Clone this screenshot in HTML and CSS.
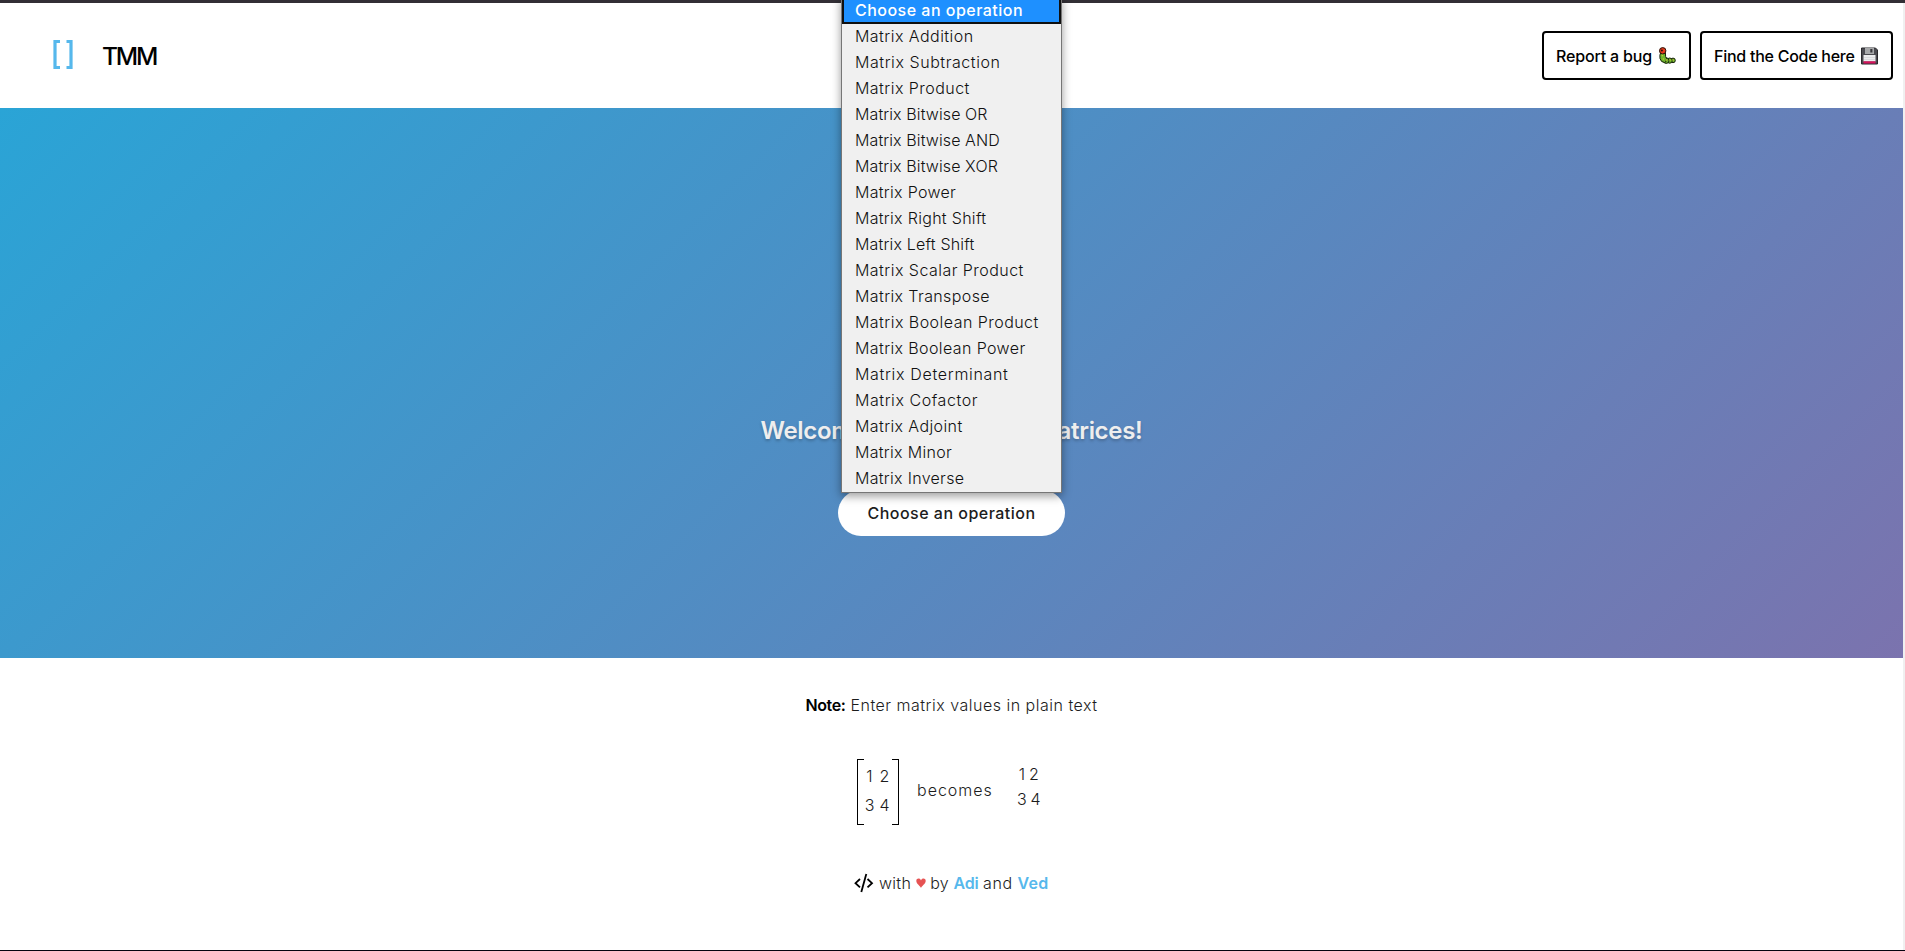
FILE: index.html
```
<!DOCTYPE html>
<html lang="en">
<head>
<meta charset="utf-8">
<title>TMM</title>
<link rel="stylesheet" href="styles.css">
</head>
<body>
<div class="page">
  <div class="top-edge"></div>
  <header class="navbar">
    <a class="brand">
      <svg class="brand-logo" width="20" height="29" viewBox="0 0 20 29"><path d="M7 1.5H2V27.5H7M13.5 1.5H18V27.5H13.5" fill="none" stroke="#56b8ec" stroke-width="3.2"/></svg>
      <span class="brand-name">TMM</span>
    </a>
    <nav class="nav-links">
      <a class="nav-button report"><span>Report a bug</span>
        <svg width="18" height="18" viewBox="0 0 18 18">
          <g fill="#6fb52c" stroke="#17210c" stroke-width="1"><circle cx="15" cy="13.4" r="2.3"/><circle cx="11.7" cy="13.6" r="2.6"/><circle cx="8.2" cy="13.6" r="2.8"/><path d="M2.8 5.5Q1.3 8 2 11.500Q3 15.500 6.500 15.500Q9 15 8.500 11.500Q7.300 10.500 7.400 6Z"/></g>
          <circle cx="4.7" cy="3.800" r="3.200" fill="#e8391b" stroke="#241309"/>
          <circle cx="3.900" cy="3.600" r="1" fill="#230f0a"/>
          <path d="M3.800 8.500h1M4.800 12h1M8 13h1M11.500 13h1M14.500 13h1" stroke="#d2cf35" stroke-width="1.300"/>
        </svg>
      </a>
      <a class="nav-button code"><span>Find the Code here</span>
        <svg width="17" height="18" viewBox="0 0 17 18">
          <path d="M.5 1H14.500L16.500 3V17H.5Z" fill="#4b4a50" stroke="#29282c"/>
          <path d="M4 1H13V7H4Z" fill="#a7a8aa"/><path d="M9.300 2H11.400V5.500H9.300Z" fill="#38373c"/>
          <path d="M2.500 8H14.500V14.500H2.500Z" fill="#ececee"/><path d="M3 10.500H14M3 12.500H14" stroke="#d2d2d5" stroke-width=".7"/>
          <path d="M2.500 14.300H14.500V16.500H2.500Z" fill="#d8125c"/>
        </svg>
      </a>
    </nav>
  </header>

  <main class="hero">
    <h1 class="welcome"><span>Welcome</span><span>Matrices!</span></h1>
    <div class="select">
      <span class="select-label">Choose an operation</span>
      <ul class="options">
        <li class="selected">Choose an operation</li>
        <li class="wide">Matrix Addition</li>
        <li class="wider">Matrix Subtraction</li>
        <li class="wide">Matrix Product</li>
        <li class="tight">Matrix Bitwise OR</li>
        <li class="tight">Matrix Bitwise AND</li>
        <li class="tight">Matrix Bitwise XOR</li>
        <li>Matrix Power</li>
        <li>Matrix Right Shift</li>
        <li class="snug">Matrix Left Shift</li>
        <li class="wide">Matrix Scalar Product</li>
        <li class="loose">Matrix Transpose</li>
        <li class="wide">Matrix Boolean Product</li>
        <li class="loose">Matrix Boolean Power</li>
        <li class="widest">Matrix Determinant</li>
        <li class="wider">Matrix Cofactor</li>
        <li class="loose">Matrix Adjoint</li>
        <li>Matrix Minor</li>
        <li>Matrix Inverse</li>
      </ul>
    </div>
  </main>

  <section class="note">
    <p class="note-text"><b>Note:</b><span>Enter matrix values in plain text</span></p>
    <div class="example">
      <div class="matrix"><span>1</span><span>2</span><span>3</span><span>4</span></div>
      <span class="becomes">becomes</span>
      <div class="plain"><span>1 2</span><span>3 4</span></div>
    </div>
  </section>

  <footer class="credits">
    <svg width="20" height="20" viewBox="0 0 20 20" fill="none" stroke="#000"><path d="M6 6L1.500 10.200L6 14.400M13.500 6L18 10.200L13.500 14.400" stroke-width="1.800"/><path d="M12.300 1L7.300 19" stroke-width="1.800"/></svg>
    <span class="with">with</span>
    <svg class="heart" width="10" height="10" viewBox="0 0 10 10"><path d="M5 10C4.500 8 .3 6 .3 2.800C.3.200 4-.3 5 2.400C6-.3 9.700.200 9.700 2.800C9.700 6 5.500 8 5 10Z" fill="#e65353"/></svg>
    <span class="by">by</span>
    <a class="adi">Adi</a>
    <span class="and">and</span>
    <a class="ved">Ved</a>
  </footer>
  <div class="bottom-edge"></div>
</div>
<div class="scrollbar"></div>
</body>
</html>
```
FILE: styles.css
```
* { box-sizing: border-box; }

body {
  margin: 0;
  height: 951px;
  display: flex;
  font: 300 16px/24px Inter, "Liberation Sans", sans-serif;
  color: #1c1c1c;
  background: #fff;
}

.page { flex: 1; display: flex; flex-direction: column; }
.top-edge { height: 3px; background: #322f35; }
.bottom-edge { height: 1px; margin-top: auto; background: #05030f; }
.scrollbar { width: 2px; background: #f0f0f0; border-top: 3px solid #322f35; border-bottom: 1px solid #05030f; }

.navbar {
  height: 105px;
  padding: 0 10px 0 53px;
  display: flex;
  align-items: center;
  justify-content: space-between;
}
.brand { display: flex; align-items: center; gap: 29px; color: #000; }
.brand-logo { display: block; margin-bottom: 2px; }
.brand-name { font-size: 24.5px; font-weight: 500; letter-spacing: -2.2px; }
.nav-links { display: flex; gap: 9px; }
.nav-button {
  height: 49px;
  padding: 0 12px;
  display: flex;
  align-items: center;
  justify-content: space-between;
  border: 2px solid #000;
  border-radius: 4px;
  font-weight: 500;
  color: #000;
}
.report { width: 149px; letter-spacing: -.17px; padding-right: 13px; }
.code { width: 193px; letter-spacing: -.26px; padding-right: 13px; }

.hero {
  height: 550px;
  display: flex;
  flex-direction: column;
  align-items: center;
  padding-top: 305px;
  background: linear-gradient(135deg, #2aa4d6, #7b73ae);
}
.welcome {
  margin: 0;
  width: 382px;
  height: 36px;
  display: flex;
  justify-content: space-between;
  font-size: 24px;
  line-height: 36px;
  font-weight: 600;
  letter-spacing: -.3px;
  color: #eee;
  text-shadow: 0 2px 3px rgba(0, 0, 0, .22);
}
.select {
  position: relative;
  width: 227px;
  height: 46px;
  margin-top: 41px;
  display: flex;
  align-items: center;
  justify-content: center;
  border-radius: 23px;
  background: #fff;
}
.select-label, .selected { font-weight: 500; letter-spacing: .48px; }
.select-label { color: #1c1c1c; }
.options {
  position: absolute;
  left: 3px;
  bottom: 43px;
  width: 221px;
  margin: 0;
  padding: 0;
  list-style: none;
  background: #f0f0f0;
  border: 1px solid #767676;
  box-shadow: 0 3px 9px rgba(0, 0, 0, .4);
  color: #111;
  letter-spacing: .3px;
}
.options li { height: 26px; padding-left: 13px; line-height: 24px; }
.options .selected {
  padding-left: 11px;
  line-height: 20px;
  letter-spacing: .48px;
  border: 2px solid #101010;
  background: #1e90ff;
  color: #fff;
}
.options .tight { letter-spacing: .1px; }
.options .snug { letter-spacing: .17px; }
.options .loose { letter-spacing: .39px; }
.options .wide { letter-spacing: .46px; }
.options .wider { letter-spacing: .56px; }
.options .widest { letter-spacing: .68px; }

.note { display: flex; flex-direction: column; align-items: center; }
.note-text { margin: 35px 0 0; width: 292px; display: flex; justify-content: space-between; white-space: nowrap; letter-spacing: .5px; }
.note-text b { font-weight: 600; letter-spacing: -.39px; color: #000; }
.example { margin-top: 42px; width: 189px; height: 66px; display: flex; }
.matrix {
  width: 42px;
  height: 66px;
  padding: 3px 5px 0 4px;
  display: grid;
  grid-template: 29px 29px / 15px 15px;
  line-height: 29px;
  text-align: center;
  border: 1px solid #000;
  border-width: 0 1px;
  background:
    linear-gradient(#000, #000) 0 0 / 6px 1px no-repeat,
    linear-gradient(#000, #000) 100% 0 / 6px 1px no-repeat,
    linear-gradient(#000, #000) 0 100% / 6px 1px no-repeat,
    linear-gradient(#000, #000) 100% 100% / 6px 1px no-repeat;
}
.becomes { margin-left: 18px; width: 76px; line-height: 63px; letter-spacing: 1px; }
.plain { margin-left: 24px; padding-top: 3px; display: flex; flex-direction: column; align-items: center; line-height: 25px; white-space: nowrap; letter-spacing: -.3px; }

.credits { margin-top: 46px; display: flex; align-items: center; justify-content: center; gap: 4.5px; letter-spacing: .3px; }
.credits a { font-weight: 600; color: #56b8ec; }
.heart { display: block; }
.and { letter-spacing: .7px; }
.adi { letter-spacing: -.19px; }
```
